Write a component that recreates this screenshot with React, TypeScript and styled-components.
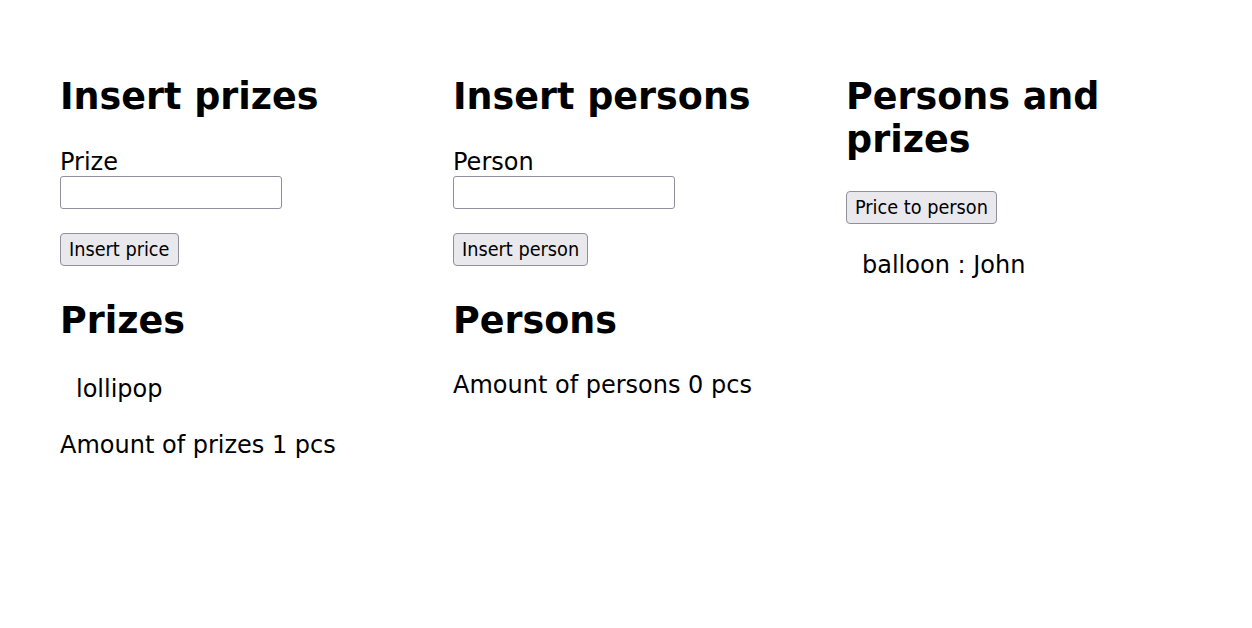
import React from "react";
import styled, { createGlobalStyle } from "styled-components";

const Global = createGlobalStyle`
  html, body { margin: 0; padding: 0; background: #fff; }
  body { font-family: "DejaVu Sans", Verdana, sans-serif; color: #000; }
`;

const Page = styled.div`
  display: grid;
  grid-template-columns: repeat(3, 333px);
  column-gap: 60px;
  padding: 75px 60px 0 60px;
  align-items: start;
`;

const Column = styled.section`
  display: flex;
  flex-direction: column;
`;

const Heading = styled.h1`
  font-size: 36.5px;
  font-weight: bold;
  line-height: 43px;
  margin: 0 0 30px 0;
`;

const SubHeading = styled.h2`
  font-size: 36.5px;
  font-weight: bold;
  line-height: 43px;
  margin: 33px 0 0 0;
`;

const Label = styled.label`
  font-size: 24px;
  line-height: 28px;
`;

const Input = styled.input`
  width: 222px;
  height: 33px;
  box-sizing: border-box;
  border: 1px solid #8f8f9d;
  border-radius: 3px;
  margin: 0;
`;

const Button = styled.button<{ $top?: number }>`
  align-self: flex-start;
  margin-top: ${(p) => p.$top ?? 24}px;
  height: 33px;
  padding: 0 8px;
  font-family: "DejaVu Sans Condensed", Tahoma, sans-serif;
  font-size: 19.7px;
  background: #e9e9ed;
  border: 1px solid #8f8f9d;
  border-radius: 4px;
  color: #000;
`;

const List = styled.ul<{ $top: number }>`
  list-style: none;
  margin: ${(p) => p.$top}px 0 0 0;
  padding: 0 0 0 16px;
`;

const Item = styled.li`
  font-size: 24px;
  line-height: 28px;
`;

const Text = styled.p<{ $top: number }>`
  font-size: 24px;
  line-height: 28px;
  margin: ${(p) => p.$top}px 0 0 0;
`;

export default function App() {
  return (
    <>
      <Global />
      <Page>
        <Column>
          <Heading>Insert prizes</Heading>
          <Label>Prize</Label>
          <Input />
          <Button>Insert price</Button>
          <SubHeading>Prizes</SubHeading>
          <List $top={33}>
            <Item>lollipop</Item>
          </List>
          <Text $top={28}>Amount of prizes 1 pcs</Text>
        </Column>
        <Column>
          <Heading>Insert persons</Heading>
          <Label>Person</Label>
          <Input />
          <Button>Insert person</Button>
          <SubHeading>Persons</SubHeading>
          <Text $top={29}>Amount of persons 0 pcs</Text>
        </Column>
        <Column>
          <Heading>Persons and prizes</Heading>
          <Button $top={0}>Price to person</Button>
          <List $top={27}>
            <Item>balloon : John</Item>
          </List>
        </Column>
      </Page>
    </>
  );
}
